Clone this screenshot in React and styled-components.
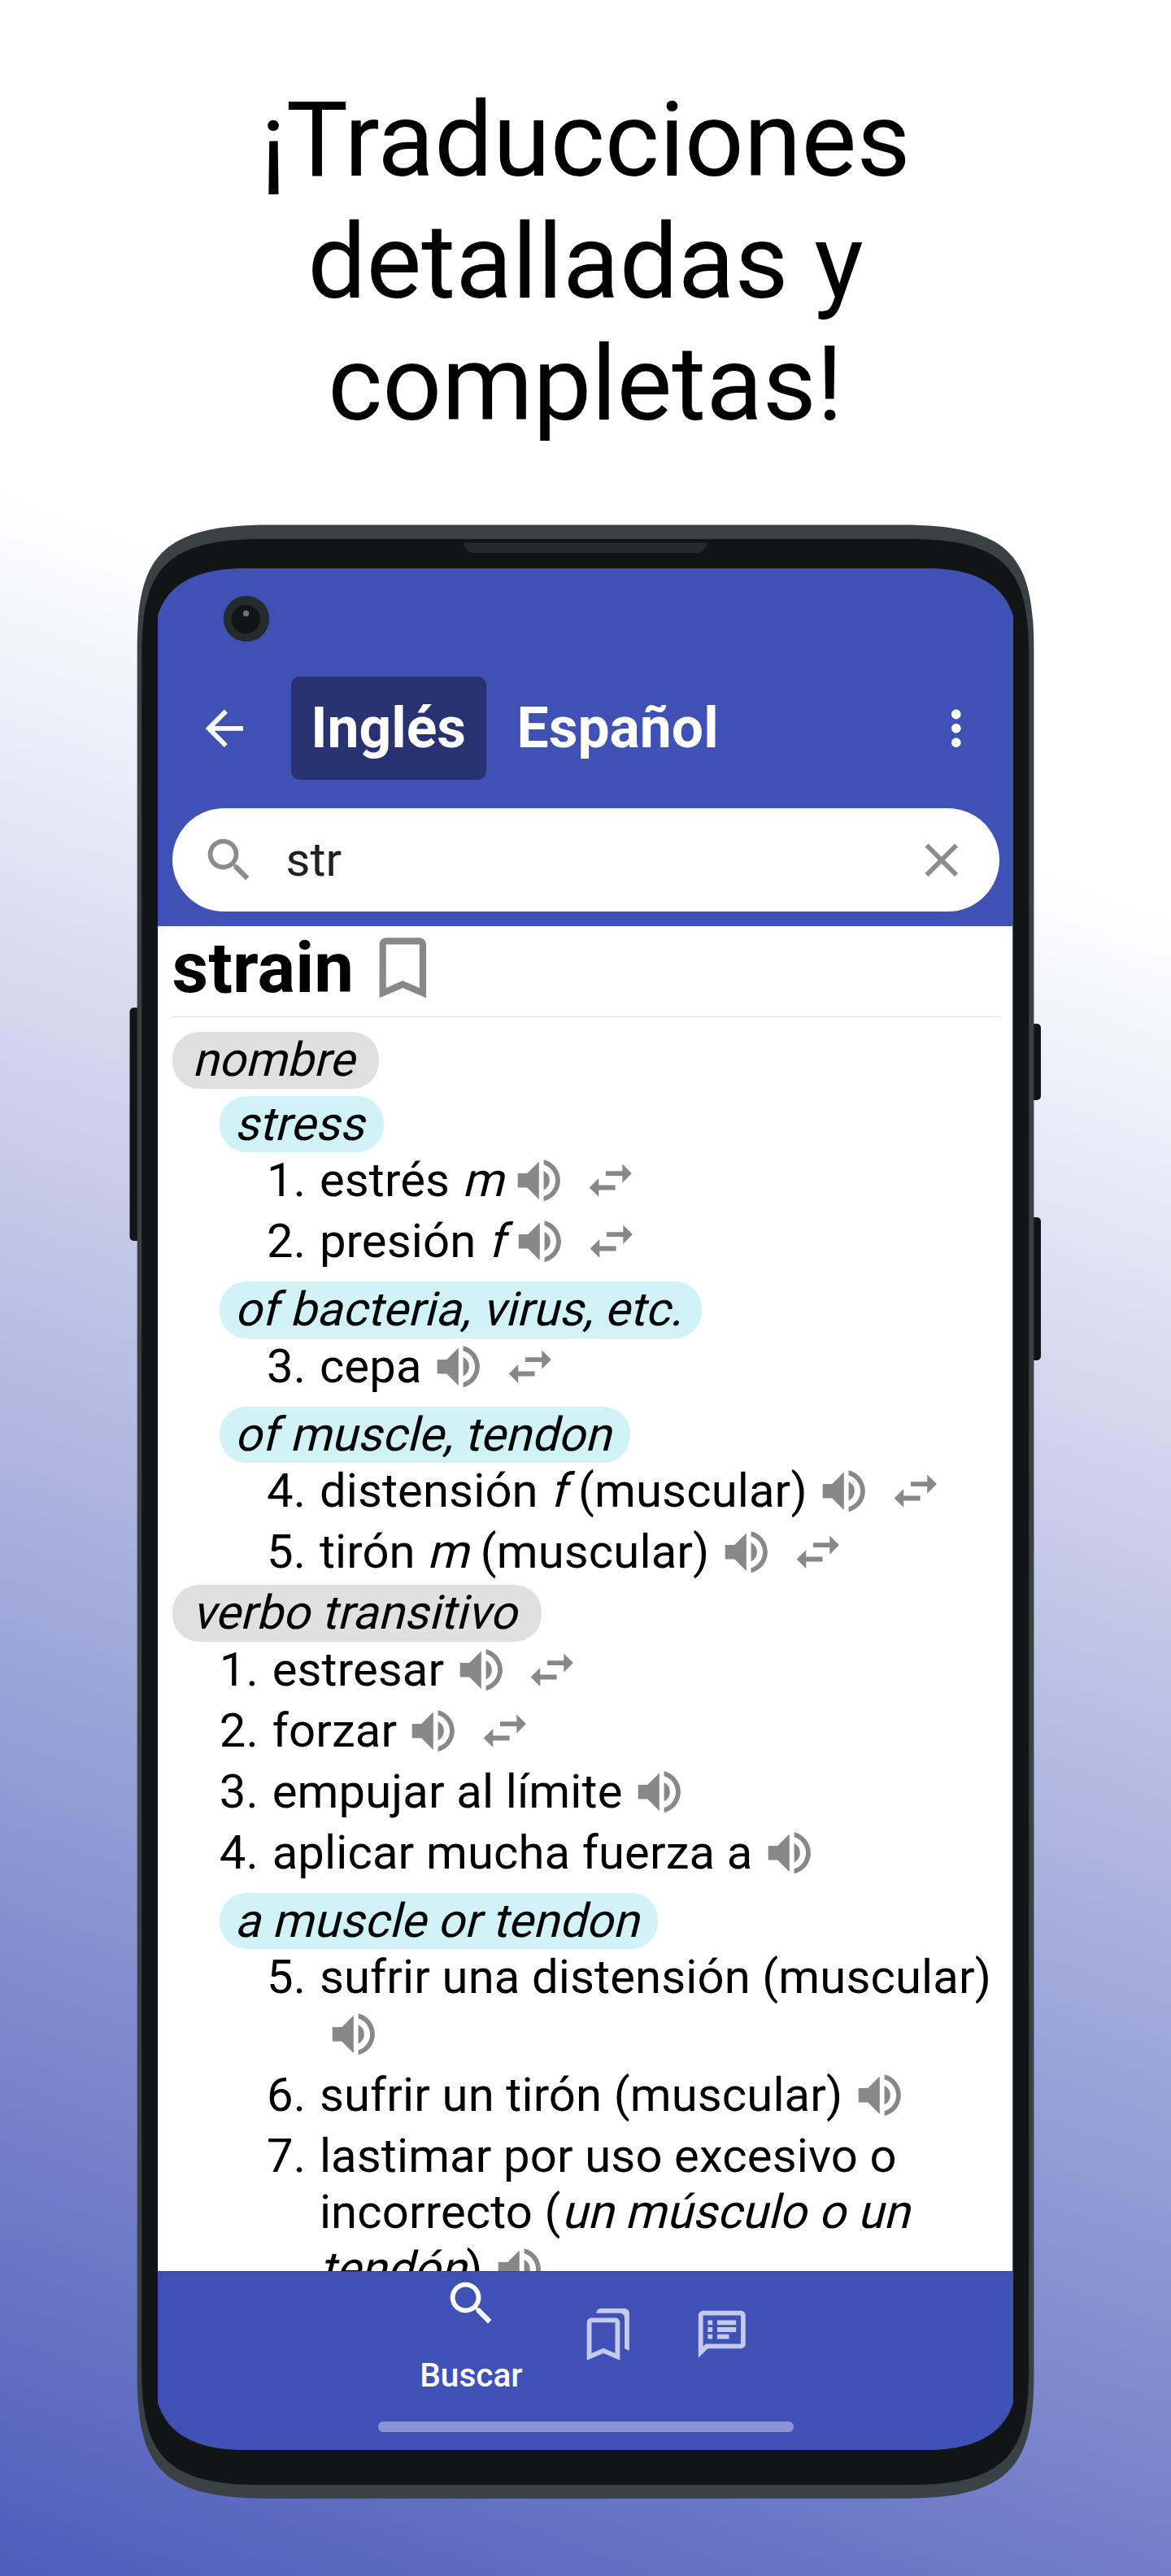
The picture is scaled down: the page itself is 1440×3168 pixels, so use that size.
import React from "react";
import styled, { createGlobalStyle } from "styled-components";
import {
  MdArrowBack,
  MdMoreVert,
  MdSearch,
  MdClose,
  MdBookmarkBorder,
  MdVolumeUp,
  MdSwapHoriz,
  MdOutlineBookmarks,
  MdOutlineSpeakerNotes,
} from "react-icons/md";

const GlobalStyle = createGlobalStyle`
  html, body { margin: 0; padding: 0; }
  * { box-sizing: border-box; }
  body { font-family: Roboto, "Liberation Sans", sans-serif; color: #000; }
`;

const Page = styled.main`
  width: 1440px;
  height: 3168px;
  overflow: hidden;
  display: flex;
  flex-direction: column;
  align-items: center;
  background: linear-gradient(200deg, #fff 30.5%, #4d5dba 100%);
`;

const Headline = styled.h1`
  width: 900px;
  margin: 97px 0 98px;
  font-size: 128px;
  line-height: 150px;
  font-weight: 400;
  text-align: center;
`;

const Phone = styled.section`
  position: relative;
  flex: none;
  width: 1124px;
  height: 2428px;
  padding: 54px 36px 0;
`;

const FrameArt = styled.svg`
  position: absolute;
  top: 0;
  left: 0;
  width: 1124px;
  height: 2428px;
  pointer-events: none;
`;

const Screen = styled.div`
  width: 1052px;
  height: 2314px;
  display: flex;
  flex-direction: column;
  background: #3f51b5;
`;

const Header = styled.header`
  flex: none;
  height: 440px;
  padding-top: 133px;
`;

const Toolbar = styled.div`
  display: flex;
  align-items: center;
  height: 127px;
  padding: 0 35px 0 46.5px;
  color: #fff;
  font-size: 69.6px;
`;

const Tabs = styled.div`
  display: flex;
  flex: 1;
  gap: 13.5px;
  margin-left: 47.6px;
`;

const Tab = styled.button`
  height: 127px;
  padding: 0 24.5px;
  border: 0;
  border-radius: 11px;
  background: ${(p) => (p.$active ? "#283271" : "transparent")};
  color: #fff;
  font: 700 69.6px/127px Roboto, "Liberation Sans", sans-serif;
`;

const SearchBox = styled.div`
  display: flex;
  align-items: center;
  height: 127px;
  margin: 35.3px 17.5px 0;
  padding: 0 35.5px 0 35px;
  border-radius: 64px;
  background: #fff;
  color: #8c8c8c;
  font-size: 69.6px;
`;

const Query = styled.span`
  flex: 1;
  margin-left: 35.5px;
  padding-bottom: 2px;
  color: #212121;
  font-size: 58px;
  line-height: 70px;
`;

const Entry = styled.article`
  flex: none;
  display: flex;
  flex-direction: column;
  height: 1654px;
  padding: 0 17.6px;
  margin-right: 0.6px;
  overflow: hidden;
  background: #fff;
  font-size: 58px;
  line-height: 69.6px;
  letter-spacing: 0.12px;
`;

const WordRow = styled.div`
  flex: none;
  display: flex;
  height: 112px;
  border-bottom: 1px solid #e0e0e0;
  margin-bottom: 18.3px;
`;

const Word = styled.h2`
  margin: 0;
  font-size: 87px;
  line-height: 102px;
  font-weight: 700;
`;

const BookmarkIcon = styled(MdBookmarkBorder)`
  flex: none;
  margin: 2.4px 0 0 10.5px;
  font-size: 98.6px;
  color: #888;
`;

/* Oblique text keeps the upright advances and leans from the baseline. */
const Slant = styled.i`
  display: inline-block;
  font-style: normal;
  transform: skewX(-14deg);
  transform-origin: 0 54.6px;
`;

const Chip = styled.span`
  flex: none;
  width: fit-content;
  height: 69.6px;
  border-radius: 33px;
  white-space: nowrap;
`;

const PartChip = styled(Chip)`
  padding: 0 31px 0 24px;
  background: #e0e0e0;
`;

const SenseChip = styled(Chip)`
  margin: 8.9px 0 0 58.3px;
  padding: 0 24.2px 0 18.2px;
  background: #d1f2f7;
`;

const Item = styled.div`
  flex: none;
  display: flex;
  margin-left: ${(p) => (p.$nested ? 116.4 : 58.2)}px;
  margin-bottom: 5.4px;
`;

const Num = styled.span`
  flex: none;
  width: 64.9px;
`;

const Body = styled.span`
  flex: 1;
  min-width: 0;
`;

const Speaker = styled(MdVolumeUp)`
  margin-left: ${(p) => p.$gap}px;
  font-size: 69.6px;
  vertical-align: top;
  color: #888;
`;

const Swap = styled(MdSwapHoriz)`
  margin-left: 18.4px;
  font-size: 69.6px;
  vertical-align: top;
  color: #888;
`;

const NavBar = styled.nav`
  flex: 1;
  display: flex;
  flex-direction: column;
  align-items: center;
  border-top: 1px solid #35469f;
  color: #c5cae9;
`;

const NavItems = styled.div`
  display: flex;
  width: 477px;
  height: 184px;
`;

const NavItem = styled.div`
  display: flex;
  flex-direction: column;
  align-items: center;
  width: ${(p) => (p.$active ? 196 : 140.5)}px;
  padding-top: ${(p) => (p.$active ? 4.3 : 42)}px;
  color: ${(p) => (p.$active ? "#fff" : "#c5cae9")};
  font-size: 69.6px;
`;

const NavLabel = styled.span`
  margin-top: 29px;
  font-size: 40.6px;
  line-height: 48px;
  font-weight: 500;
`;

const HomeBar = styled.div`
  width: 511px;
  height: 12.6px;
  border-radius: 6.3px;
  background: #8b94d3;
`;

const OUTER =
  "M168.7 800C168.7 690 192 645.5 330 645.5H1110C1248 645.5 1271.4 690 1271.4 800V2918C1271.4 3028 1248 3072.7 1110 3072.7H330C192 3072.7 168.7 3028 168.7 2918Z";
const BEZEL =
  "M174.2 810C174.2 712 192 663 320 663H1120C1248 663 1265.2 712 1265.2 810V2909C1265.2 3007 1248 3056 1120 3056H320C192 3056 174.2 3007 174.2 2909Z";
const GLASS =
  "M194 757C203 728 228 699 300 699H1140C1212 699 1237 728 1246 757V2955C1237 2984 1212 3013 1140 3013H300C228 3013 203 2984 194 2955Z";

function PhoneFrame() {
  return (
    <FrameArt viewBox="158 645 1124 2428" aria-hidden="true">
      <g fill="#111515">
        <path d="M169 1239.3H164.5a5 5 0 0 0-5 5V1521a5 5 0 0 0 5 5H169Z" />
        <path d="M1271 1259H1275a5 5 0 0 1 5 5V1348a5 5 0 0 1-5 5H1271Z" />
        <path d="M1271 1497H1275a5 5 0 0 1 5 5V1668a5 5 0 0 1-5 5H1271Z" />
      </g>
      <path d={OUTER + GLASS} fillRule="evenodd" fill="#3a4144" />
      <path d={BEZEL + GLASS} fillRule="evenodd" fill="#111515" />
      <path
        d="M571 667.5H868.5L870.4 670C866 673 864.5 680 859 680H581C575 680 574 673 569 670Z"
        fill="#252a2c"
      />
      <circle cx="303" cy="761" r="28.2" fill="#252a2c" />
      <circle cx="302.2" cy="761.6" r="17.7" fill="#111515" />
      <circle cx="302.5" cy="754.5" r="3.7" fill="#697376" />
    </FrameArt>
  );
}

function Translation({ n, nested, swap, gap = 10.2, children }) {
  return (
    <Item $nested={nested}>
      <Num>{n}.</Num>
      <Body>
        {children}
        <wbr />
        <Speaker $gap={gap} />
        {swap && <Swap />}
      </Body>
    </Item>
  );
}

function Part({ children }) {
  return (
    <PartChip>
      <Slant>{children}</Slant>
    </PartChip>
  );
}

function Sense({ children }) {
  return (
    <SenseChip>
      <Slant>{children}</Slant>
    </SenseChip>
  );
}

export default function App() {
  return (
    <>
      <GlobalStyle />
      <Page>
        <Headline>
          ¡Traducciones
          <br />
          detalladas y<br />
          completas!
        </Headline>
        <Phone>
          <Screen>
            <Header>
              <Toolbar>
                <MdArrowBack />
                <Tabs>
                  <Tab $active>Inglés</Tab>
                  <Tab>Español</Tab>
                </Tabs>
                <MdMoreVert />
              </Toolbar>
              <SearchBox>
                <MdSearch />
                <Query>str</Query>
                <MdClose />
              </SearchBox>
            </Header>
            <Entry>
              <WordRow>
                <Word>strain</Word>
                <BookmarkIcon />
              </WordRow>
              <Part>nombre</Part>
              <Sense>stress</Sense>
              <Translation n={1} nested swap gap={9.3}>
                estrés <Slant>m</Slant>
              </Translation>
              <Translation n={2} nested swap gap={9.3}>
                presión <Slant>f</Slant>
              </Translation>
              <Sense>of bacteria, virus, etc.</Sense>
              <Translation n={3} nested swap>
                cepa
              </Translation>
              <Sense>of muscle, tendon</Sense>
              <Translation n={4} nested swap>
                distensión <Slant>f</Slant> (muscular)
              </Translation>
              <Translation n={5} nested swap>
                tirón <Slant>m</Slant> (muscular)
              </Translation>
              <Part>verbo transitivo</Part>
              <Translation n={1} swap>
                estresar
              </Translation>
              <Translation n={2} swap>
                forzar
              </Translation>
              <Translation n={3}>empujar al límite</Translation>
              <Translation n={4}>aplicar mucha fuerza a</Translation>
              <Sense>a muscle or tendon</Sense>
              <Translation n={5} nested gap={7.5}>
                sufrir una distensión (muscular)
              </Translation>
              <Translation n={6} nested>
                sufrir un tirón (muscular)
              </Translation>
              <Translation n={7} nested>
                lastimar por uso excesivo o incorrecto (<Slant>un</Slant>{" "}
                <Slant>músculo</Slant> <Slant>o</Slant> <Slant>un</Slant>{" "}
                <Slant>tendón</Slant>)
              </Translation>
            </Entry>
            <NavBar>
              <NavItems>
                <NavItem $active>
                  <MdSearch />
                  <NavLabel>Buscar</NavLabel>
                </NavItem>
                <NavItem>
                  <MdOutlineBookmarks />
                </NavItem>
                <NavItem>
                  <MdOutlineSpeakerNotes />
                </NavItem>
              </NavItems>
              <HomeBar />
            </NavBar>
          </Screen>
          <PhoneFrame />
        </Phone>
      </Page>
    </>
  );
}
